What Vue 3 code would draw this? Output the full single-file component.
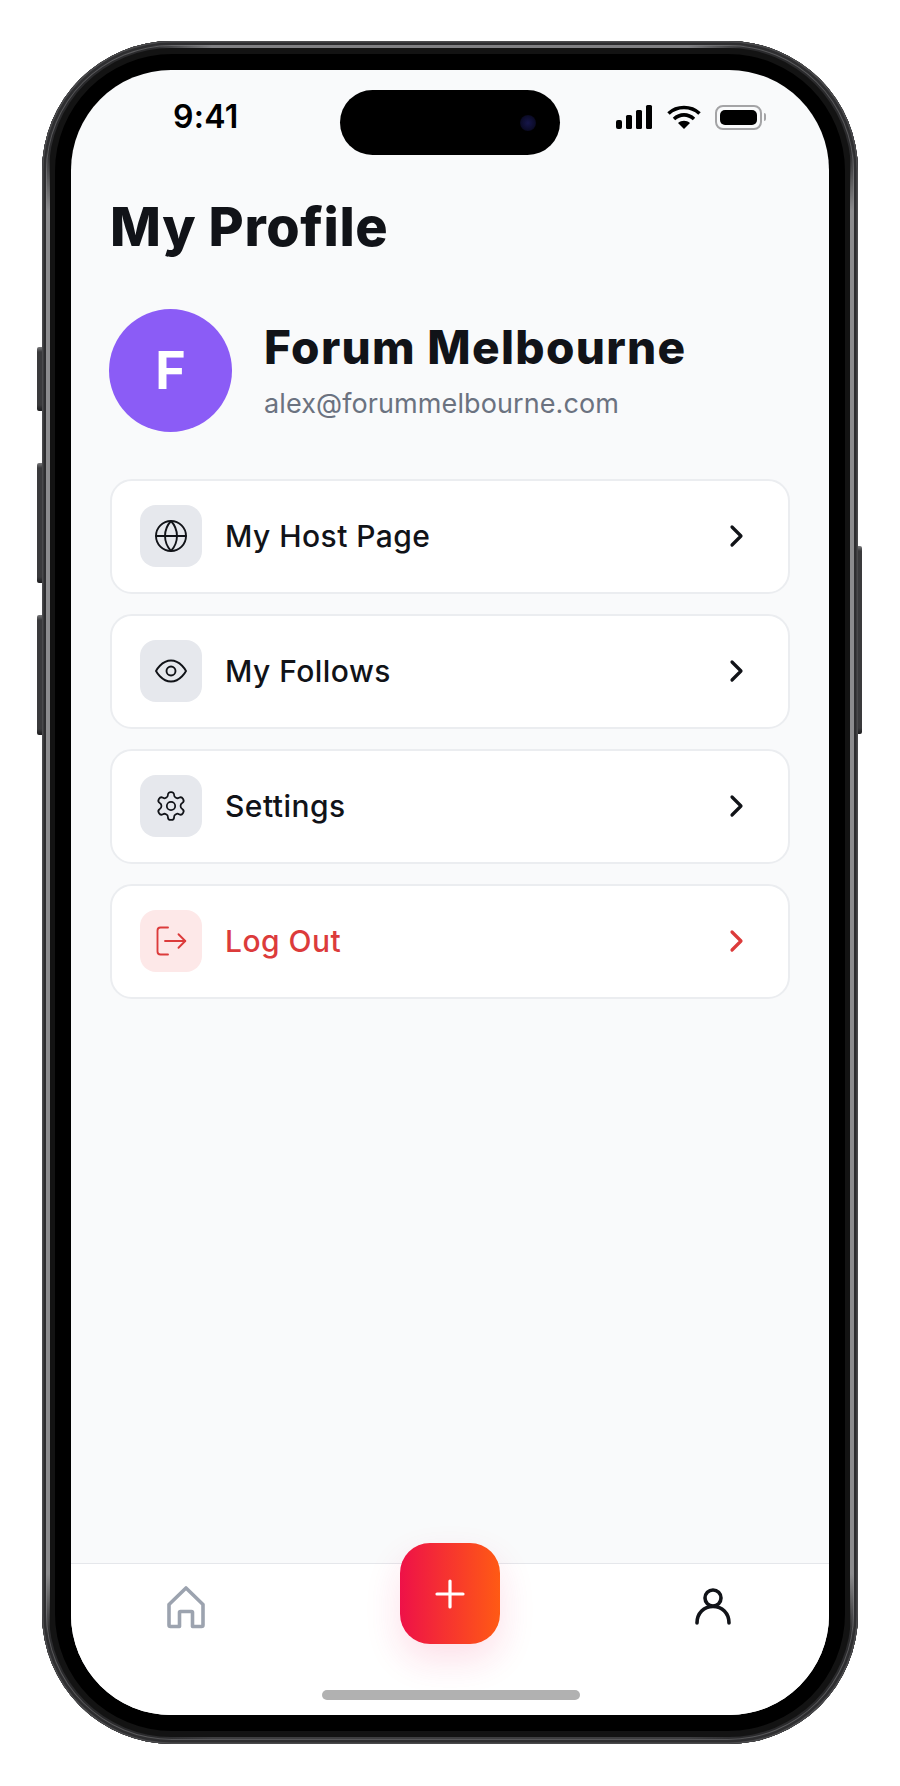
<template>
  <div class="page">
    <div class="phone">
      <span class="side-btn btn-mute"></span>
      <span class="side-btn btn-up"></span>
      <span class="side-btn btn-down"></span>
      <span class="side-btn btn-power"></span>

      <div class="screen">
        <header class="status">
          <span class="time">9:41</span>
          <div class="island"><span class="camera"></span></div>
          <div class="status-icons">
            <svg width="37" height="24" viewBox="0 0 37 24" fill="#000">
              <rect x="0" y="15" width="6" height="9" rx="2" />
              <rect x="10" y="10" width="6" height="14" rx="1.5" />
              <rect x="20" y="5" width="6" height="19" rx="1.5" />
              <rect x="30" y="0" width="6" height="24" rx="1.5" />
            </svg>
            <svg width="34" height="24" viewBox="0 0 34 24" fill="none" stroke="#000" stroke-width="3.6">
              <path d="M1.5 8.5C10 0.5 24 0.5 32.5 8.5" />
              <path d="M7 14C13 8.5 21 8.5 27 14" />
              <path d="M17 24 L11 18C14.5 15 19.5 15 23 18Z" fill="#000" stroke="none" />
            </svg>
            <div class="battery"><span class="battery-level"></span></div>
            <span class="battery-nub"></span>
          </div>
        </header>

        <main class="content">
          <h1 class="title">My Profile</h1>

          <section class="profile">
            <div class="avatar">F</div>
            <div>
              <h2 class="name">Forum Melbourne</h2>
              <p class="email">alex@forummelbourne.com</p>
            </div>
          </section>

          <nav class="menu">
            <a v-for="item in menu" :key="item.label" class="menu-row" :class="{ danger: item.danger }">
              <span class="menu-icon">
                <svg width="36" height="36" viewBox="0 0 24 24" fill="none" stroke="currentColor" stroke-width="1.25" stroke-linecap="round" stroke-linejoin="round">
                  <template v-if="item.icon === 'globe'">
                    <circle cx="12" cy="12" r="10" />
                    <path d="M2 12h20" />
                    <path d="M12 2a15 15 0 0 1 4 10 15 15 0 0 1-4 10 15 15 0 0 1-4-10 15 15 0 0 1 4-10z" />
                  </template>
                  <template v-else-if="item.icon === 'eye'">
                    <path d="M2 12s3.600-7 10-7 10 7 10 7-3.600 7-10 7-10-7-10-7Z" />
                    <circle cx="12" cy="12" r="3" />
                  </template>
                  <g v-else-if="item.icon === 'gear'" transform="translate(12 12) scale(.93) translate(-12 -12)">
                    <path d="M12.22 2h-.44a2 2 0 0 0-2 2v.18a2 2 0 0 1-1 1.73l-.43.25a2 2 0 0 1-2 0l-.15-.08a2 2 0 0 0-2.73.73l-.22.38a2 2 0 0 0 .73 2.73l.15.1a2 2 0 0 1 1 1.72v.51a2 2 0 0 1-1 1.74l-.15.09a2 2 0 0 0-.73 2.73l.22.38a2 2 0 0 0 2.73.73l.15-.08a2 2 0 0 1 2 0l.43.25a2 2 0 0 1 1 1.73V20a2 2 0 0 0 2 2h.44a2 2 0 0 0 2-2v-.18a2 2 0 0 1 1-1.73l.43-.25a2 2 0 0 1 2 0l.15.08a2 2 0 0 0 2.73-.73l.22-.39a2 2 0 0 0-.73-2.73l-.15-.08a2 2 0 0 1-1-1.74v-.5a2 2 0 0 1 1-1.74l.15-.09a2 2 0 0 0 .73-2.73l-.22-.38a2 2 0 0 0-2.73-.73l-.15.08a2 2 0 0 1-2 0l-.43-.25a2 2 0 0 1-1-1.73V4a2 2 0 0 0-2-2z" />
                    <circle cx="12" cy="12" r="3" />
                  </g>
                  <template v-else>
                    <path d="M10 3H5a2 2 0 0 0-2 2v14a2 2 0 0 0 2 2h5" />
                    <path d="M17 7.500l4.500 4.500-4.500 4.500" />
                    <path d="M8 12h13.500" />
                  </template>
                </svg>
              </span>
              <span class="menu-label">{{ item.label }}</span>
              <svg class="chevron" width="20" height="26" viewBox="0 0 20 26" fill="none" stroke="currentColor" stroke-width="3.2" stroke-linecap="round" stroke-linejoin="round">
                <path d="M5 4l9 9-9 9" />
              </svg>
            </a>
          </nav>
        </main>

        <footer class="tabbar">
          <svg class="tab-home" width="42" height="44" viewBox="0 0 42 44" fill="none" stroke="#9ca3af" stroke-width="3.6" stroke-linejoin="round">
            <path d="M21 3L38 19.500V40a1.500 1.500 0 0 1-1.500 1.500H27.500V27.500a1 1 0 0 0-1-1H15.500a1 1 0 0 0-1 1V41.500H5.500A1.500 1.500 0 0 1 4 40V19.500Z" />
          </svg>
          <button class="fab" type="button">
            <svg width="32" height="32" viewBox="0 0 32 32" stroke="#fff" stroke-width="3.2" stroke-linecap="round">
              <path d="M16 3v26M3 16h26" />
            </svg>
          </button>
          <svg class="tab-user" width="36" height="38" viewBox="0 0 36 38" fill="none" stroke="#111318" stroke-width="3.6" stroke-linecap="round">
            <circle cx="18" cy="11" r="8" />
            <path d="M2 36c0-10 7-16.500 16-16.500S34 26 34 36" />
          </svg>
          <span class="home-bar"></span>
        </footer>
      </div>
    </div>
  </div>
</template>

<script setup>
const menu = [
  { label: 'My Host Page', icon: 'globe' },
  { label: 'My Follows', icon: 'eye' },
  { label: 'Settings', icon: 'gear' },
  { label: 'Log Out', icon: 'logout', danger: true }
]
</script>

<style>
html,
body {
  margin: 0;
  background: #fff;
}
</style>

<style scoped>
.page {
  width: 900px;
  height: 1786px;
  padding: 41px 42px 42px;
  box-sizing: border-box;
  font-family: Inter, 'Liberation Sans', sans-serif;
  color: #111318;
}

.phone {
  position: relative;
  height: 100%;
  padding: 29px;
  box-sizing: border-box;
  border-radius: 130px;
  background: #000;
  box-shadow:
    inset 0 0 0 1.5px #4a4a4c,
    inset 0 0 0 4px #2e2e30,
    inset 0 0 0 5px #58585a,
    inset 0 0 0 7px #2a2a2c,
    inset 0 0 0 13px #131313;
}
/* the metal band only catches light on its straight runs */
.phone::before {
  content: '';
  position: absolute;
  inset: 0;
  border-radius: inherit;
  pointer-events: none;
  background:
    linear-gradient(to bottom, transparent 110px, #8c8c8e 170px, #8c8c8e calc(100% - 170px), transparent calc(100% - 110px)) 4px 0 / 4px 100% no-repeat,
    linear-gradient(to bottom, transparent 110px, #8c8c8e 170px, #8c8c8e calc(100% - 170px), transparent calc(100% - 110px)) calc(100% - 4px) 0 / 4px 100% no-repeat,
    linear-gradient(to right, transparent 110px, #808083 170px, #808083 calc(100% - 170px), transparent calc(100% - 110px)) 0 4px / 100% 3px no-repeat,
    linear-gradient(to right, transparent 110px, #3e3e40 170px, #3e3e40 calc(100% - 170px), transparent calc(100% - 110px)) 0 calc(100% - 5px) / 100% 2px no-repeat;
}

.side-btn {
  position: absolute;
  width: 5px;
  background: linear-gradient(180deg, #7a7a7c 0, #3a3a3c 5px, #3a3a3c calc(100% - 6px), #1c1c1e 100%);
  border-radius: 2px 0 0 2px;
}
.btn-mute { left: -5px; top: 306px; height: 64px; }
.btn-up { left: -5px; top: 422px; height: 120px; }
.btn-down { left: -5px; top: 574px; height: 120px; }
.btn-power {
  right: -4px;
  width: 4px;
  top: 505px;
  height: 188px;
  border-radius: 0 2px 2px 0;
}

.screen {
  position: relative;
  display: flex;
  flex-direction: column;
  height: 100%;
  overflow: hidden;
  border-radius: 100px;
  background: #f9fafb;
}

.status {
  display: grid;
  grid-template-columns: 1fr 220px 1fr;
  align-items: center;
  height: 65px;
  margin-top: 20px;
  flex-shrink: 0;
}
.time {
  padding-left: 102px;
  margin-top: -11px;
  font-size: 32px;
  font-weight: 600;
  line-height: 36px;
  letter-spacing: 0.3px;
  color: #000;
}
.island {
  display: flex;
  align-items: center;
  justify-content: flex-end;
  height: 65px;
  padding-right: 24px;
  box-sizing: border-box;
  border-radius: 33px;
  background: #000;
}
.camera {
  width: 16px;
  height: 16px;
  border-radius: 50%;
  background: radial-gradient(circle, #16164a 0%, #0c0c2a 60%, #000 100%);
}
.status-icons {
  display: flex;
  align-items: center;
  gap: 14px;
  padding-left: 56px;
  margin-top: -11px;
}
.battery {
  width: 47px;
  height: 25px;
  padding: 3px;
  margin-right: -12px;
  box-sizing: border-box;
  border: 2px solid #a4a4a6;
  border-radius: 8px;
}
.battery-level {
  display: block;
  height: 100%;
  border-radius: 5px;
  background: #000;
}
.battery-nub {
  width: 2px;
  height: 8px;
  border-radius: 0 2px 2px 0;
  background: #a5a5a7;
}

.content {
  flex: 1;
  padding: 0 39px 0 38px;
}

.title {
  margin: 40px 0 0 1px;
  font-size: 54px;
  font-weight: 800;
  line-height: 64px;
  letter-spacing: 0.6px;
}

.profile {
  display: flex;
  align-items: center;
  gap: 32px;
  margin-top: 50px;
}
.avatar {
  display: flex;
  align-items: center;
  justify-content: center;
  width: 123px;
  height: 123px;
  flex-shrink: 0;
  border-radius: 50%;
  background: #8b5cf6;
  color: #fff;
  font-size: 52px;
  font-weight: 700;
}
.name {
  margin: 0;
  font-size: 46px;
  font-weight: 800;
  line-height: 56px;
  letter-spacing: 1.3px;
}
.email {
  margin: 11px 0 0;
  font-size: 27px;
  line-height: 36px;
  letter-spacing: 0.1px;
  color: #6b7280;
}

.menu {
  display: flex;
  flex-direction: column;
  gap: 20px;
  margin: 47px 0 0 1px;
}
.menu-row {
  display: flex;
  align-items: center;
  height: 115px;
  padding: 0 41px 1px 28px;
  box-sizing: border-box;
  border: 2px solid #ebedf0;
  border-radius: 22px;
  background: #fff;
}
.menu-icon {
  display: flex;
  align-items: center;
  justify-content: center;
  width: 62px;
  height: 62px;
  flex-shrink: 0;
  border-radius: 16px;
  background: #e6e8ed;
}
.menu-label {
  flex: 1;
  margin-left: 23px;
  font-size: 30px;
  font-weight: 480;
  letter-spacing: 0.45px;
}
.danger {
  color: #dc3b3b;
}
.danger .menu-icon {
  background: #fde8e8;
}

.tabbar {
  position: relative;
  display: grid;
  grid-template-columns: 230px 1fr 230px;
  justify-items: center;
  align-items: start;
  height: 152px;
  box-sizing: border-box;
  flex-shrink: 0;
  border-top: 1.5px solid #e5e7eb;
  background: #fff;
}
.tab-home {
  margin-top: 21px;
}
.tab-user {
  margin: 23px 2px 0 0;
}
.fab {
  display: flex;
  align-items: center;
  justify-content: center;
  width: 100px;
  height: 101px;
  margin-top: -21px;
  padding: 0;
  border: 0;
  border-radius: 30px;
  background: linear-gradient(90deg, #ee1148, #ff5a14);
  box-shadow: 0 16px 36px rgba(240, 30, 90, 0.14);
}
.home-bar {
  position: absolute;
  left: 251px;
  bottom: 15px;
  width: 258px;
  height: 10px;
  border-radius: 5px;
  background: #b1b1b1;
}
</style>
